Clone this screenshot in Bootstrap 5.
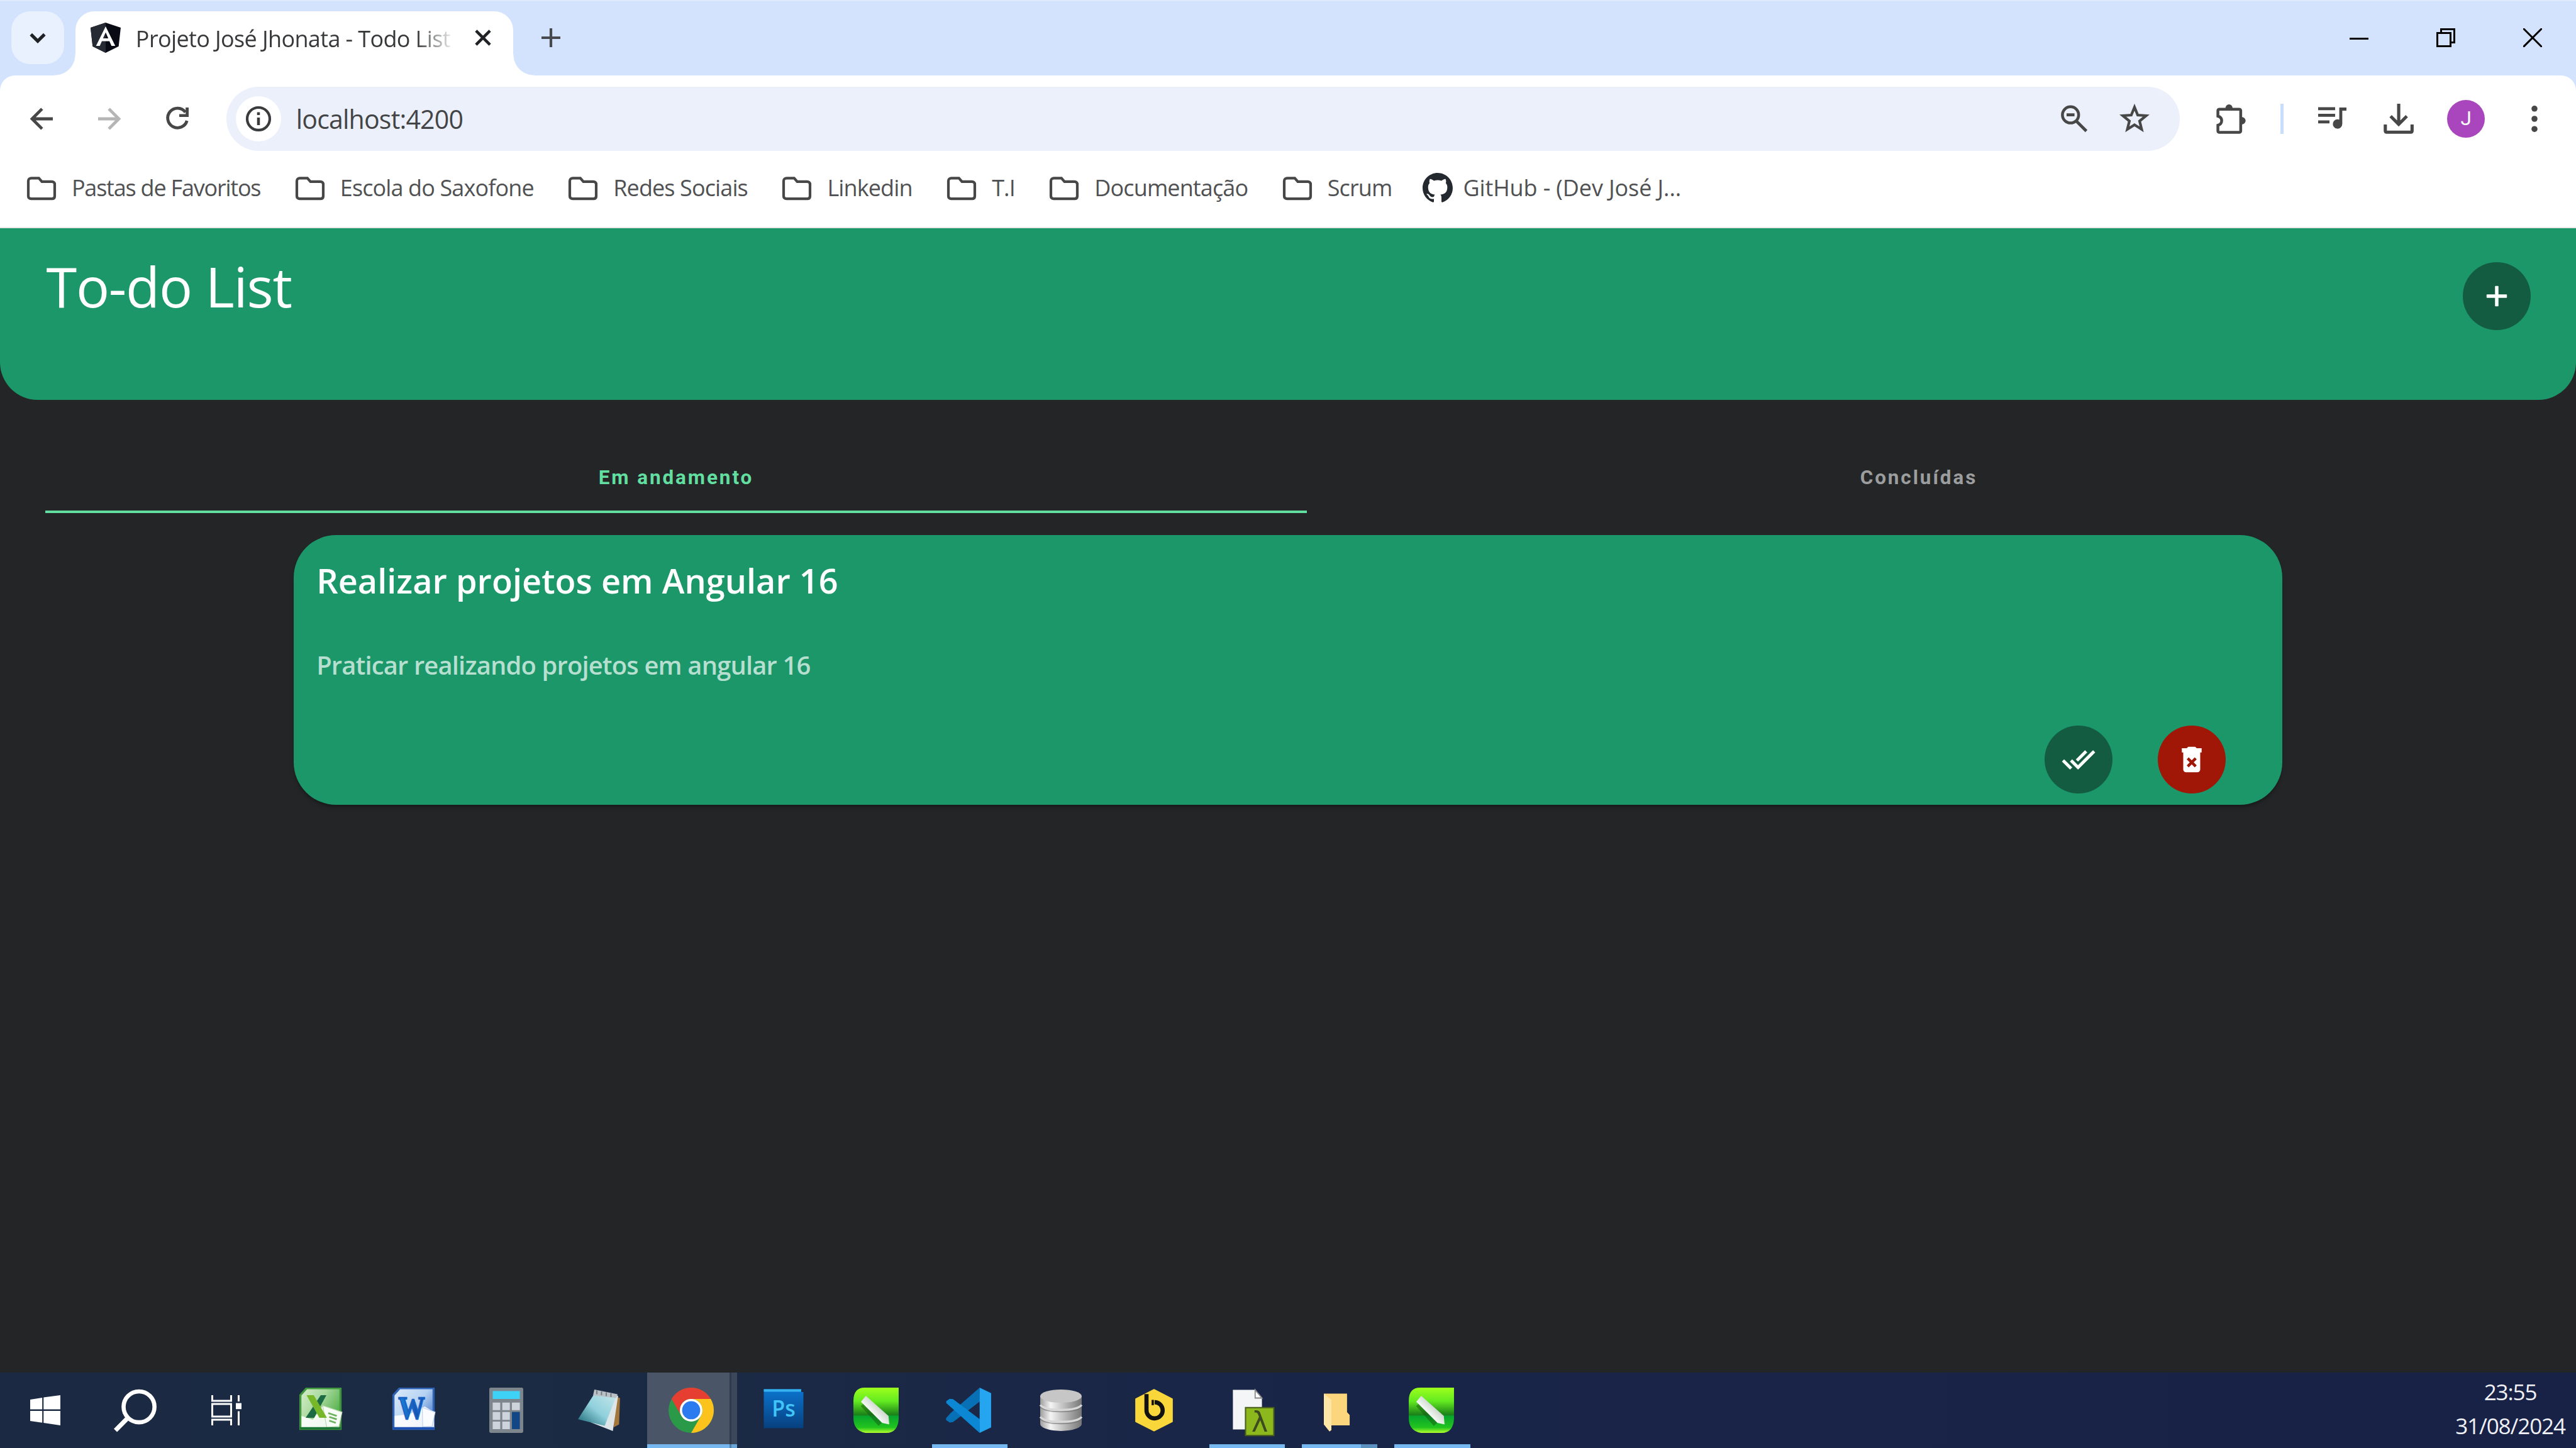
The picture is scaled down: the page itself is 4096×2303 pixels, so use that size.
<!DOCTYPE html>
<html lang="pt-BR">
<head>
<meta charset="utf-8">
<title>Projeto José Jhonata - Todo List</title>
<link href="https://cdn.jsdelivr.net/npm/bootstrap@5.3.0/dist/css/bootstrap.min.css" rel="stylesheet">
<style>
html{font-size:calc(100vw / 136.6)}
body{font-family:"Open Sans","Noto Sans",sans-serif;background:#232526;font-size:1.2rem;line-height:1.5;overflow:hidden;height:100vh}
svg{display:block;flex:none}
.s10{width:1rem;height:1rem}.s16{width:1.6rem;height:1.6rem}.s18{width:1.8rem;height:1.8rem}.s24{width:2.4rem;height:2.4rem}
.ui-label{white-space:nowrap;display:inline-block}
/* tab strip */
.tabstrip{height:4rem;background:#d3e2fd;padding:.6rem 1.8rem 0 .6rem;box-shadow:inset 0 .06rem 0 #dfeafd}
.chev{width:2.8rem;height:2.8rem;border-radius:1rem;background:#e9f1fe}
.tab-active{width:23.2rem;height:3.4rem;margin-left:.6rem;background:#fff;border-radius:1rem 1rem 0 0;padding:0 1.1rem .6rem .8rem}
.tab-active::before,.tab-active::after{content:"";position:absolute;bottom:0;width:1.1rem;height:1.1rem}
.tab-active::before{left:-1.1rem;background:radial-gradient(circle at 0 0,transparent 1.07rem,#fff 1.1rem)}
.tab-active::after{right:-1.1rem;background:radial-gradient(circle at 100% 0,transparent 1.07rem,#fff 1.1rem)}
.tab-title{width:16.8rem;margin-left:.8rem;padding-top:.12rem;color:#36383a;letter-spacing:-.0205rem;-webkit-mask-image:linear-gradient(90deg,#000 88%,transparent 101%);mask-image:linear-gradient(90deg,#000 88%,transparent 101%)}
.newtab{margin:.9rem 0 0 1.5rem}
.winbtns{height:2.8rem;gap:3.6rem}
/* toolbar */
.chrome-back{background:#d3e2fd}
.toolbar{height:4rem;border-radius:.8rem .8rem 0 0;background:#fff;padding:.6rem 1.4rem 0 1.4rem}
.navicons{gap:2rem;width:10.6rem}
.omni{width:103.6rem;height:3.4rem;border-radius:1.7rem;background:#ebf0fa;padding:0 1.6rem 0 .5rem}
.omni-end{gap:1.62rem}
.info{width:2.4rem;height:2.4rem}
.url{font-size:1.37rem;color:#434446;margin-left:.8rem;letter-spacing:-.027rem;padding-top:.05rem}
.tools{padding-left:1.9rem}
.avatar-j{width:2rem;height:2rem;background:#a946bd;font-size:1.05rem;font-family:Roboto,sans-serif}
.toolsep{width:.16rem;height:1.6rem;background:#c8defc}
.bookmarks{height:4.1rem;background:#fff;padding:0 1.4rem .1rem;gap:1.82rem;color:#505153;letter-spacing:-.029rem;border-bottom:.1rem solid #eae8e7}
.bm{gap:.8rem}
.bm:first-child{letter-spacing:-.04rem}
.bm-site{gap:.55rem;margin-left:-.2rem;letter-spacing:-.0035rem}
/* application */
.app-head{height:9.1rem;background:#1b976a;border-radius:0 0 2rem 2rem;padding:1.06rem 2.39rem 0 2.45rem}
.app-title{font-size:2.95rem;line-height:4rem;font-weight:400;letter-spacing:-.042rem}
.fab{width:3.6rem;height:3.6rem;background:#145c41;color:#fff}
.fab-red{background:#a01607}
.app-head .fab{margin-top:.75rem}
.tabs-row{margin:2.34rem 2.4rem 0;height:3.68rem;font:700 1.05rem/3.6rem Roboto,sans-serif;letter-spacing:.0965rem}
.tab-a{width:66.9rem;color:#62dfa0;border-bottom:.15rem solid #62dfa0}
.tab-b{width:64.9rem;color:#9c9d9e}
.task{width:105.44rem;height:14.3rem;margin:1.17rem auto 0;background:#1b976a;border-radius:2.25rem;padding:1.23rem 3rem .6rem 1.2rem;box-shadow:0 .2rem .2rem -.1rem rgba(0,0,0,.35);border:0}
.task-title{font-size:1.8rem;line-height:2.4rem;font-weight:600;letter-spacing:.0015rem}
.task-sub{font-size:1.33rem;line-height:2rem;font-weight:600;margin-top:2.28rem;color:#b6dfd0;letter-spacing:-.0275rem}
.task-actions{gap:2.4rem}
/* taskbar */
.taskbar{height:4rem;background:linear-gradient(90deg,#1b2a42 0,#1b2b43 20%,#1a2746 38%,#192548 55%,#182146 100%)}
.sys{width:4.8rem}.slot{width:4.907rem}
.pinned{margin-left:.17rem}
.run::after,.slot-active::after,.run2::after{content:"";position:absolute;left:.5rem;right:.4rem;bottom:0;height:.2rem;background:#77b7ef}
.run2::after{background:linear-gradient(90deg,#77b7ef 78%,#5b90bf 78%)}
.slot-active{width:4.787rem;margin-left:.12rem;padding-right:.12rem;background:linear-gradient(90deg,#4a5567 0 91.4%,#2f3a4e 91.4% 93.6%,#3b475a 93.6%)}
.slot-active::after{left:0;right:0;background:linear-gradient(90deg,#77b7ef 91.4%,#4f7ea8 91.4% 93.6%,#6aa5d8 93.6%)}
.over{overflow:visible}
.clock{font-size:1.17rem;line-height:1.8rem;color:#f0f1f5;padding-right:.57rem;padding-top:.13rem;letter-spacing:-.038rem}
</style>
</head>
<body class="d-flex flex-column">
<svg width="0" height="0" class="position-absolute">
 <defs>
  <symbol id="folder" viewBox="0 0 16 16"><path d="M2.600 2.800h4l1.600 1.800h5.300c.9 0 1.500.6 1.500 1.400v6.300c0 .9-.6 1.400-1.500 1.400h-11C1.600 13.700 1 13.200 1 12.300v-8c0-.9.7-1.500 1.600-1.500z" fill="none" stroke="#474747" stroke-width="1.400"/></symbol>
  <linearGradient id="cg" x1="0" y1="0" x2="0" y2="1"><stop offset="0" stop-color="#9dff1c"/><stop offset=".3" stop-color="#63ea20"/><stop offset=".6" stop-color="#1b8018"/><stop offset=".63" stop-color="#08a52c"/><stop offset=".88" stop-color="#22c41f"/><stop offset="1" stop-color="#b4ff2c"/></linearGradient>
  <linearGradient id="pen" x1="0" y1="1" x2="1" y2="0"><stop offset=".35" stop-color="#fff"/><stop offset=".65" stop-color="#c9d5c9"/></linearGradient>
  <symbol id="corel" viewBox="0 0 24 24"><path d="M6 0h18v16.500Q23.600 24 17.500 24H6.500Q0 23 0 16V7Q0 0 6 0z" fill="url(#cg)"/><path d="M5.600 8.200 15 18.700" stroke="#145c14" stroke-opacity=".5" stroke-width="4.600"/><path d="M4 7.500 6.600 4.300 18.600 15 19 19.500 15.200 18.700z" fill="url(#pen)"/></symbol>
 </defs>
</svg>

<header class="chrome-back">
 <div class="tabstrip d-flex align-items-start">
  <div class="chev d-flex align-items-center justify-content-center"><svg class="s10" viewBox="0 0 10 10"><path d="M1.400 3.200 5 6.800 8.600 3.200" fill="none" stroke="#1f2124" stroke-width="1.700"/></svg></div>
  <div class="tab-active position-relative d-flex align-items-center">
   <svg class="s16" viewBox="0 0 16 16"><path d="M8 0 16 2.700 14.900 12.600 8 16 1.100 12.600 0 2.700z" fill="#080b14"/><path d="M8 0 0 2.700 1.100 12.600 8 16z" fill="#252a33"/><path d="M8 2 2.900 12.300h2l1.100-2.500h4l1.100 2.500h2zM8 5.200 9.400 8.300H6.600z" fill="#fff" fill-rule="evenodd"/></svg>
   <div class="tab-title overflow-hidden"><span class="ui-label">Projeto José Jhonata - Todo List</span></div>
   <svg class="s10 ms-auto" viewBox="0 0 10 10"><path d="M1.300 1.300l7.400 7.400M8.700 1.300 1.300 8.700" stroke="#1f2124" stroke-width="1.500"/></svg>
  </div>
  <svg class="s10 newtab" viewBox="0 0 10 10"><path d="M5 0v10M0 5h10" stroke="#47494c" stroke-width="1.400"/></svg>
  <div class="winbtns d-flex align-items-center ms-auto">
   <svg class="s10" viewBox="0 0 10 10"><path d="M0 5.500h10" stroke="#000"/></svg>
   <svg class="s10" viewBox="0 0 10 10"><path d="M.5 2.500h7v7h-7zM2.500 2.500v-2h7v7h-2" fill="none" stroke="#000"/></svg>
   <svg class="s10" viewBox="0 0 10 10"><path d="M0 0l10 10M10 0 0 10" stroke="#000"/></svg>
  </div>
 </div>

 <div class="toolbar d-flex align-items-center">
  <div class="navicons d-flex">
   <svg class="s16" viewBox="0 0 16 16"><path d="M14 8H3.500M8.300 2.700 3 8l5.300 5.300" fill="none" stroke="#474747" stroke-width="1.600"/></svg>
   <svg class="s16" viewBox="0 0 16 16"><path d="M2 8h10.500M7.700 2.700 13 8l-5.300 5.300" fill="none" stroke="#b5b5b5" stroke-width="1.600"/></svg>
   <svg class="s16" viewBox="0 0 16 16"><path d="M12.300 4.500A5.200 5.200 0 1 0 13.100 9" fill="none" stroke="#474747" stroke-width="1.600"/><path d="M14 2v5H9V5.500h3.400V2z" fill="#474747"/></svg>
  </div>
  <div class="omni d-flex align-items-center">
   <div class="info bg-white rounded-circle d-flex align-items-center justify-content-center"><svg class="s16" viewBox="0 0 16 16"><circle cx="8" cy="8" r="6" fill="none" stroke="#3a3b3d" stroke-width="1.400"/><path d="M8 7.300v4M8 4.500V6" stroke="#3a3b3d" stroke-width="1.500"/></svg></div>
   <span class="url ui-label">localhost:4200</span>
   <div class="omni-end ms-auto d-flex">
    <svg class="s16" viewBox="0 0 16 16"><circle cx="6.100" cy="5.900" r="4.300" fill="none" stroke="#474747" stroke-width="1.500"/><path d="M9.200 9.200 14.500 14.500M4 5.900h4.200" stroke="#474747" stroke-width="1.600"/></svg>
    <svg class="s16" viewBox="0 0 16 16"><path d="M8 1.800 9.700 6l4.500.3-3.500 2.900 1.100 4.400L8 11.200l-3.800 2.400 1.100-4.400L1.800 6.300 6.300 6z" fill="none" stroke="#474747" stroke-width="1.400"/></svg>
   </div>
  </div>
  <div class="tools d-flex align-items-center flex-fill justify-content-between">
   <svg class="s16" viewBox="0 0 16 16"><path d="M2 2.900h10.500c.4 0 .8.300.8.700v10.900c0 .4-.4.700-.8.700H2c-.4 0-.8-.3-.8-.7v-3.100c1.500-.4 2-1.200 2-2.400s-.5-2-2-2.400v-3c0-.4.400-.7.800-.7z" fill="none" stroke="#474747" stroke-width="1.500"/><path d="M5.200 2.500a1.900 2.200 0 0 1 3.800 0zM13.700 7a2.200 2 0 0 1 0 4z" fill="#474747"/></svg>
   <div class="toolsep"></div>
   <svg class="s16" viewBox="0 0 16 16"><path d="M0 2.600h9M0 6.100h9M0 9.600h6" stroke="#474747" stroke-width="1.600"/><path d="M11.200 2H15v1.700h-2.200v7a2.500 2.500 0 1 1-1.600-2.300z" fill="#474747"/></svg>
   <svg class="s16 over" viewBox="0 0 16 16"><path d="M8.700 0v10.500M4.400 6.600 8.700 10.900l4.300-4.300M1.600 11v3.300c0 .5.300.8.700.8h12.800c.4 0 .7-.3.700-.8V11" fill="none" stroke="#474747" stroke-width="1.700"/></svg>
   <div class="avatar-j rounded-circle text-white d-flex align-items-center justify-content-center">J</div>
   <svg class="s16" viewBox="0 0 16 16"><g fill="#474747"><circle cx="8" cy="2.600" r="1.600"/><circle cx="8" cy="8" r="1.600"/><circle cx="8" cy="13.400" r="1.600"/></g></svg>
  </div>
 </div>

 <nav class="bookmarks d-flex align-items-center">
  <div class="bm d-flex align-items-center"><svg class="s16"><use href="#folder"/></svg><span class="ui-label">Pastas de Favoritos</span></div>
  <div class="bm d-flex align-items-center"><svg class="s16"><use href="#folder"/></svg><span class="ui-label">Escola do Saxofone</span></div>
  <div class="bm d-flex align-items-center"><svg class="s16"><use href="#folder"/></svg><span class="ui-label">Redes Sociais</span></div>
  <div class="bm d-flex align-items-center"><svg class="s16"><use href="#folder"/></svg><span class="ui-label">Linkedin</span></div>
  <div class="bm d-flex align-items-center"><svg class="s16"><use href="#folder"/></svg><span class="ui-label">T.I</span></div>
  <div class="bm d-flex align-items-center"><svg class="s16"><use href="#folder"/></svg><span class="ui-label">Documentação</span></div>
  <div class="bm d-flex align-items-center"><svg class="s16"><use href="#folder"/></svg><span class="ui-label">Scrum</span></div>
  <div class="bm bm-site d-flex align-items-center"><svg class="s16" viewBox="0 0 16 16"><path fill="#24292f" d="M8 0C3.580 0 0 3.580 0 8c0 3.540 2.290 6.530 5.470 7.590.4.070.55-.17.55-.38 0-.19-.01-.82-.01-1.490-2.010.37-2.530-.49-2.690-.94-.09-.23-.48-.94-.82-1.130-.28-.15-.68-.52-.01-.53.63-.01 1.080.58 1.230.82.72 1.210 1.870.87 2.330.66.07-.52.28-.87.51-1.070-1.780-.2-3.640-.89-3.640-3.950 0-.87.31-1.590.82-2.150-.08-.2-.36-1.020.08-2.120 0 0 .67-.21 2.200.82.64-.18 1.320-.27 2-.27s1.360.09 2 .27c1.530-1.040 2.200-.82 2.200-.82.44 1.100.16 1.920.08 2.120.51.56.82 1.270.82 2.150 0 3.070-1.870 3.750-3.650 3.950.29.25.54.73.54 1.480 0 1.070-.01 1.930-.01 2.200 0 .21.15.46.55.38A8.010 8.010 0 0 0 16 8c0-4.420-3.580-8-8-8z"/></svg><span class="ui-label">GitHub - (Dev José J...</span></div>
 </nav>
</header>

<main class="flex-fill">
 <div class="app-head text-white d-flex justify-content-between align-items-start">
  <h1 class="app-title ui-label m-0">To-do List</h1>
  <button class="fab btn p-0 border-0 rounded-circle d-flex align-items-center justify-content-center"><svg class="s18" viewBox="0 0 24 24"><path d="M19 13h-6v6h-2v-6H5v-2h6V5h2v6h6z" fill="#fff" stroke="#fff" stroke-width=".4"/></svg></button>
 </div>
 <div class="tabs-row d-flex text-center">
  <div class="tab-a"><span class="ui-label">Em andamento</span></div>
  <div class="tab-b"><span class="ui-label">Concluídas</span></div>
 </div>
 <section class="task card d-flex flex-column align-items-start">
  <h2 class="task-title ui-label text-white m-0">Realizar projetos em Angular 16</h2>
  <p class="task-sub ui-label mb-0">Praticar realizando projetos em angular 16</p>
  <div class="task-actions d-flex mt-auto ms-auto">
   <button class="fab btn p-0 border-0 rounded-circle d-flex align-items-center justify-content-center"><svg class="s18" viewBox="0 0 24 24"><path fill="#fff" stroke="#fff" stroke-width=".3" d="M18 7l-1.410-1.410-6.340 6.340 1.410 1.410L18 7zm4.240-1.410L11.660 16.170 7.480 12l-1.410 1.410L11.660 19l12-12-1.420-1.410zM.41 13.410L6 19l1.410-1.410L1.830 12 .41 13.410z"/></svg></button>
   <button class="fab fab-red btn p-0 border-0 rounded-circle d-flex align-items-center justify-content-center"><svg class="s18" viewBox="0 0 24 24"><path fill="#fff" d="M6 19c0 1.100.9 2 2 2h8c1.100 0 2-.9 2-2V7H6v12zm2.460-7.120l1.410-1.410L12 12.590l2.120-2.120 1.410 1.410L13.410 14l2.120 2.120-1.410 1.410L12 15.410l-2.120 2.120-1.410-1.410L10.590 14l-2.130-2.120zM15.500 4l-1-1h-5l-1 1H5v3h14V4z"/></svg></button>
  </div>
 </section>
</main>

<footer class="taskbar d-flex fixed-bottom">
 <div class="sys d-flex align-items-center justify-content-center"><svg class="s16" viewBox="0 0 16 16"><path fill="#fff" d="M0 2.300 6.400 1.300V7.500H0zM7.100 1.200 16 0v7.500H7.100zM0 8.300h6.400v6.300L0 13.700zM7.100 8.300H16V16l-8.900-1.300z"/></svg></div>
 <div class="sys d-flex align-items-center justify-content-center"><svg class="s24" viewBox="0 0 24 24"><circle cx="13.700" cy="10.200" r="8.200" fill="none" stroke="#fff" stroke-width="2.200"/><path d="M7.800 16 1.200 22.700" stroke="#fff" stroke-width="2.400"/></svg></div>
 <div class="sys d-flex align-items-center justify-content-center"><svg class="s16" viewBox="0 0 16 16"><path d="M.5 0v3h10V0M.5 16v-3h10v3M.5 4.700h10v6.600H.500zM14.500 0v3.300M14.500 8.500V16" fill="none" stroke="#fff"/><path d="M13 4.200h3v3.200h-3z" fill="#fff"/></svg></div>
 <div class="pinned d-flex">
 <div class="slot d-flex align-items-center justify-content-center"><svg class="s24" viewBox="0 0 24 24">
   <defs><linearGradient id="xg" x1="0" y1="0" x2="1" y2=".6"><stop offset="0" stop-color="#d8eecb"/><stop offset=".5" stop-color="#a6d89c"/><stop offset="1" stop-color="#4fae45"/></linearGradient></defs>
   <path d="M4.500.3h18v21.600H1.200V4z" fill="url(#xg)" stroke="#3f963c" stroke-width="1.100"/><path d="M1.800 15l6 2 5-7 9 3v8.200H1.800z" fill="#fff" opacity=".9"/><path d="M13 9.500 23.300 13l-1.600 7.500-6.500.6z" fill="#f8fcf6" stroke="#b8d8b0" stroke-width=".4"/><path d="M16 13.500l4.500 1.500M16.500 15.500l4 1.300M16.500 17.500l3.500 1.200" stroke="#6ab25c" stroke-width=".9"/><path d="M1 21.500h21.700" stroke="#1a7434" stroke-width="1.200"/>
   <path d="M12 4h3L8.500 16H4z" fill="#1c6a44"/><path d="M4.500 4h3.800l7 12h-4z" fill="#76b82a"/></svg></div>
 <div class="slot d-flex align-items-center justify-content-center"><svg class="s24" viewBox="0 0 24 24">
   <defs><linearGradient id="wg" x1="0" y1="0" x2="1" y2=".7"><stop offset="0" stop-color="#dcebfa"/><stop offset=".6" stop-color="#b6d2f2"/><stop offset="1" stop-color="#4f80cf"/></linearGradient><linearGradient id="wl"><stop offset="0" stop-color="#1a86dc"/><stop offset="1" stop-color="#1440a0"/></linearGradient></defs>
   <path d="M4.500.3h18v21.600H1.200V4z" fill="url(#wg)" stroke="#2f62b5" stroke-width="1.100"/><path d="M1.800 15l8-1 8-4 5 3v8.200H1.800z" fill="#fff" opacity=".9"/><path d="M16.500 10.500 23.300 13l-1.600 7.500-5 .3z" fill="#fafcff" stroke="#c3d4ee" stroke-width=".4"/><path d="M1 21.500h21.700" stroke="#1c4fae" stroke-width="1.200"/>
   <text x="10.800" y="16.200" text-anchor="middle" font-family="Liberation Serif,serif" font-weight="700" font-size="17" textLength="14" lengthAdjust="spacingAndGlyphs" fill="url(#wl)" stroke="#1a63c4" stroke-width=".8">W</text></svg></div>
 <div class="slot d-flex align-items-center justify-content-center"><svg class="s24" viewBox="0 0 24 24"><rect x="3" y="0" width="18" height="24" rx=".8" fill="#7d858d"/><rect x="4.800" y="1.800" width="14.400" height="4.200" fill="#3fd2f7"/><g fill="#cdd4dc"><path d="M4.800 7.900h4v4h-4zM9.900 7.900h4v4h-4zM15 7.900h4.200v4H15zM4.800 12.900h4v4.200h-4zM9.900 12.900h4v4.200h-4zM4.800 18h4v4h-4zM9.900 18h4v4h-4z"/></g><path d="M15 12.900h4.200V22H15z" fill="#114785"/></svg></div>
 <div class="slot d-flex align-items-center justify-content-center"><svg class="s24" viewBox="0 0 24 24"><defs><linearGradient id="ng" x1="0" y1="1" x2="1" y2="0"><stop offset="0" stop-color="#14616f"/><stop offset=".5" stop-color="#8fd0dc"/><stop offset="1" stop-color="#c5e6ea"/></linearGradient></defs><path d="M20.500 4.500 23.300 5.500 22.800 19.500 20 21z" fill="#a3763c"/><path d="M9.700 1.300 22.300 4.300 19.500 23 8 18.500z" fill="#dde5e9"/><path d="M9.200 4 21 5.200 15.200 20.300 1 16.800z" fill="url(#ng)"/><path d="M9.700 1 22 3.500 21.300 5.500 9 4.200z" fill="#b9c1c6"/><path d="M11 1.500v2M13.500 2v2M16 2.500v2M18.500 3v2" stroke="#6f777c" stroke-width=".6"/></svg></div>
 <div class="slot slot-active position-relative d-flex align-items-center justify-content-center"><svg class="s24" viewBox="0 0 24 24"><circle cx="12" cy="12" r="12" fill="#2a9a48"/><path d="M1.610 6A12 12 0 0 1 22.400 6H12a6 6 0 0 0-5.200 9z" fill="#e63e31"/><path d="M22.400 6A12 12 0 0 1 12 24L17.200 15A6 6 0 0 0 12 6z" fill="#fcc31c"/><circle cx="12" cy="12" r="6" fill="#fff"/><circle cx="12" cy="12" r="4.800" fill="#2c7af0"/></svg></div>
 <div class="slot d-flex align-items-center justify-content-center"><svg class="s24" viewBox="0 0 24 24"><defs><linearGradient id="pg" x1="0" y1="0" x2="0" y2="1"><stop offset="0" stop-color="#0b74cf"/><stop offset="1" stop-color="#07407f"/></linearGradient></defs><path d="M1.500.8h19.800v1.500h1.200V21.500H1.500z" fill="url(#pg)"/><path d="M1.500.8h19.800v1.400H1.500z" fill="#36b2ee"/><text x="12" y="15.300" text-anchor="middle" font-family="Open Sans,sans-serif" font-weight="600" font-size="12" textLength="12.500" lengthAdjust="spacingAndGlyphs" fill="#41c4f7">Ps</text></svg></div>
 <div class="slot d-flex align-items-center justify-content-center"><svg class="s24"><use href="#corel"/></svg></div>
 <div class="slot run position-relative d-flex align-items-center justify-content-center"><svg class="s24" viewBox="0 0 24 24"><path d="M17.900 0 2.400 13.600.1 16.200v1L2 18.500l1.800-.2L18 7.300z" fill="#0870b5"/><path d="M17.900 24 .2 8.200v-1L2 5.900l1.800.2L18 16.800z" fill="#0c87d3"/><path d="M17.900 0 24 2.900v18.200L17.900 24z" fill="#25a5f0"/></svg></div>
 <div class="slot d-flex align-items-center justify-content-center"><svg class="s24" viewBox="0 0 24 24"><defs><linearGradient id="dg"><stop offset="0" stop-color="#9d9d9d"/><stop offset=".25" stop-color="#f4f4f4"/><stop offset=".65" stop-color="#b0b0b0"/><stop offset="1" stop-color="#777"/></linearGradient></defs><path d="M1 4.500v14.800c0 2 5 3.700 11 3.700s11-1.700 11-3.700V4.500z" fill="url(#dg)"/><path d="M1 9.200c1.500 2 6 2.600 11 2.600s9.500-.6 11-2.600M1 15.500c1.500 2 6 2.600 11 2.600s9.500-.6 11-2.600" fill="none" stroke="#d8d8d8" stroke-width="1.100"/><path d="M1 10.200c1.500 2 6 2.600 11 2.600s9.500-.6 11-2.600M1 16.500c1.500 2 6 2.600 11 2.600s9.500-.6 11-2.600" fill="none" stroke="#6d6d6d" stroke-width=".6" opacity=".6"/><ellipse cx="12" cy="4.500" rx="11" ry="3.500" fill="#c6c6c6"/></svg></div>
 <div class="slot d-flex align-items-center justify-content-center"><svg class="s24" viewBox="0 0 24 24"><path d="M12 1 21.700 6v12L12 23l-9.700-5V6z" fill="#f9d73b" stroke="#f9d73b" stroke-width=".5" stroke-linejoin="round"/><path d="M8 3.400v8.300a4.300 4.300 0 1 0 4.300-4" fill="none" stroke="#111" stroke-width="2.200"/><path d="M11.300 6.500v2.800" stroke="#111" stroke-width="1.200"/></svg></div>
 <div class="slot run position-relative d-flex align-items-center justify-content-center"><svg class="s24 over" viewBox="0 0 24 24"><path d="M4.800 1.200h12l3.400 4v17H4.800z" fill="#f4f5f7"/><path d="M16.600 1.200v4.300h3.600z" fill="#fff" stroke="#888" stroke-width=".6"/><rect x="11.500" y="10.600" width="15" height="14.800" fill="#8cb81e" stroke="#4b5f1c" stroke-width=".7"/><text x="19" y="23.200" text-anchor="middle" font-family="DejaVu Sans,sans-serif" font-size="15" fill="#3d4a20">λ</text></svg></div>
 <div class="slot run2 position-relative d-flex align-items-center justify-content-center"><svg class="s24" viewBox="0 0 24 24"><path d="M4 3.200h12.300v9.800l1.400 1.500V20H8z" fill="#fbd67c"/><path d="M4 3.200 8 6.500V22.500L7 23.300 4 19.500z" fill="#fde6a6"/></svg></div>
 <div class="slot run position-relative d-flex align-items-center justify-content-center"><svg class="s24"><use href="#corel"/></svg></div>
 </div>
 <div class="clock ms-auto text-center"><span class="ui-label">23:55</span><br><span class="ui-label">31/08/2024</span></div>
</footer>
<script src="https://cdn.jsdelivr.net/npm/bootstrap@5.3.0/dist/js/bootstrap.bundle.min.js"></script>
</body>
</html>
